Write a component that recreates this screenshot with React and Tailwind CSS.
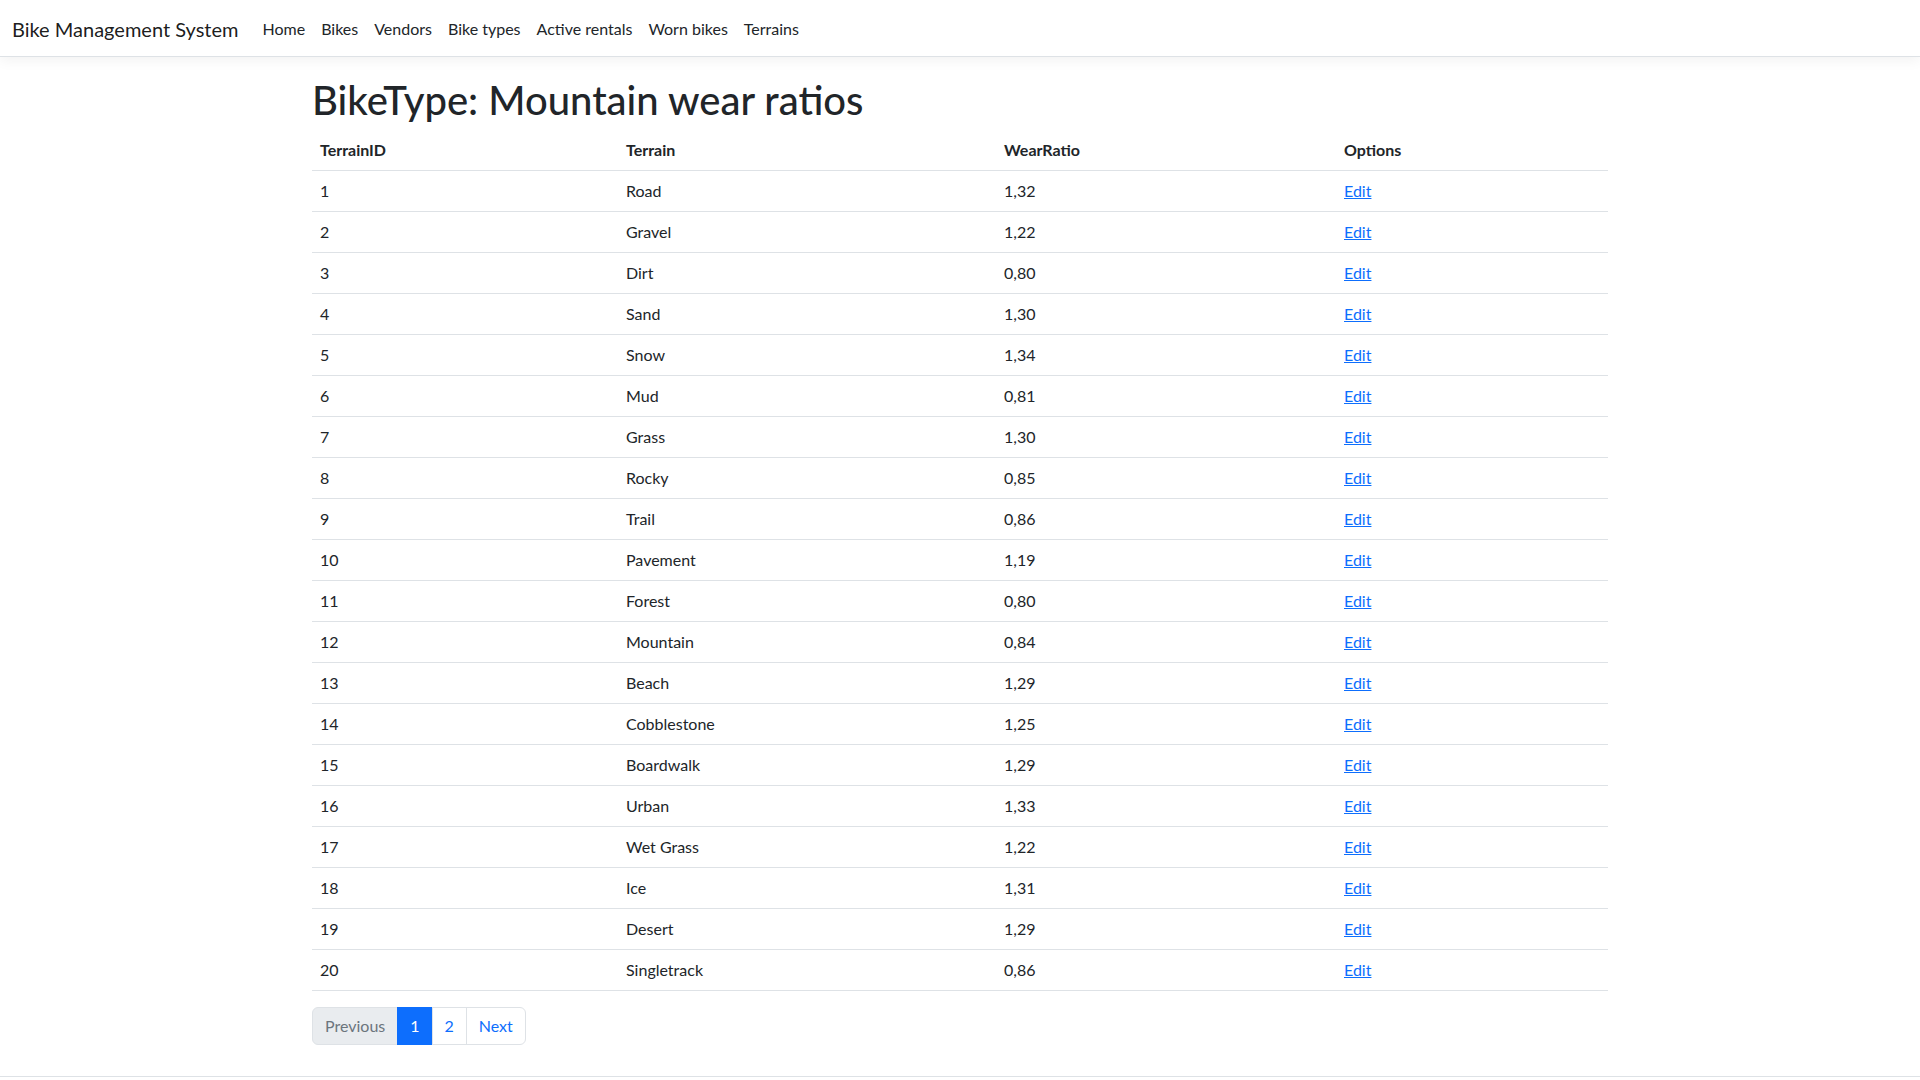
import React from 'react';

const rows = [
  [1, 'Road', '1,32'],
  [2, 'Gravel', '1,22'],
  [3, 'Dirt', '0,80'],
  [4, 'Sand', '1,30'],
  [5, 'Snow', '1,34'],
  [6, 'Mud', '0,81'],
  [7, 'Grass', '1,30'],
  [8, 'Rocky', '0,85'],
  [9, 'Trail', '0,86'],
  [10, 'Pavement', '1,19'],
  [11, 'Forest', '0,80'],
  [12, 'Mountain', '0,84'],
  [13, 'Beach', '1,29'],
  [14, 'Cobblestone', '1,25'],
  [15, 'Boardwalk', '1,29'],
  [16, 'Urban', '1,33'],
  [17, 'Wet Grass', '1,22'],
  [18, 'Ice', '1,31'],
  [19, 'Desert', '1,29'],
  [20, 'Singletrack', '0,86'],
];

const navLinks = ['Home', 'Bikes', 'Vendors', 'Bike types', 'Active rentals', 'Worn bikes', 'Terrains'];

const App = () => {
  return (
    <div className="min-h-screen bg-white text-[#212529] text-[16px] leading-6 font-['Lato','Open_Sans',sans-serif]">
      {/* Navbar */}
      <nav className="bg-white border-b border-[#dee2e6] shadow-[0_4px_12px_rgba(0,0,0,0.05)] mb-4 py-2">
        <div className="px-3 flex items-center h-10">
          <a href="#" className="text-[20px] leading-[30px] pt-[6px] pb-[4px] mr-4 text-black/90">Bike Management System</a>
          <ul className="flex pt-[2px]">
            {navLinks.map((l) => (
              <li key={l}>
                <a href="#" className="block p-2 text-[#212529]">{l}</a>
              </li>
            ))}
          </ul>
        </div>
      </nav>

      {/* Main */}
      <main className="w-[1320px] mx-auto px-3">
        <h1 className="text-[40px] leading-[48px] font-medium pt-[3px] mb-[6px]">BikeType: Mountain wear ratios</h1>

        <table className="w-full mb-4 border-collapse text-left">
          <thead>
            <tr className="border-b border-[#dee2e6]">
              <th className="w-[306px] px-2 py-2 font-bold">TerrainID</th>
              <th className="w-[378px] px-2 py-2 font-bold">Terrain</th>
              <th className="w-[340px] px-2 py-2 font-bold">WearRatio</th>
              <th className="px-2 py-2 font-bold">Options</th>
            </tr>
          </thead>
          <tbody>
            {rows.map(([id, name, ratio]) => (
              <tr key={id} className="border-b border-[#dee2e6]">
                <td className="px-2 py-2">{id}</td>
                <td className="px-2 py-2">{name}</td>
                <td className="px-2 py-2">{ratio}</td>
                <td className="px-2 py-2">
                  <a href="#" className="text-[#0d6efd] underline">Edit</a>
                </td>
              </tr>
            ))}
          </tbody>
        </table>

        <ul className="flex mb-[31px]">
          <li>
            <span className="block px-3 py-[6px] border border-[#dee2e6] rounded-l-md bg-[#e9ecef] text-[#6c757d]">Previous</span>
          </li>
          <li>
            <span className="block px-3 py-[6px] border border-[#0d6efd] bg-[#0d6efd] text-white -ml-px">1</span>
          </li>
          <li>
            <a href="#" className="block px-3 py-[6px] border border-[#dee2e6] text-[#0d6efd] -ml-px">2</a>
          </li>
          <li>
            <a href="#" className="block px-3 py-[6px] border border-[#dee2e6] rounded-r-md text-[#0d6efd] -ml-px">Next</a>
          </li>
        </ul>
      </main>

      <footer className="border-t border-[#dee2e6]" />
    </div>
  );
};

export default App;
